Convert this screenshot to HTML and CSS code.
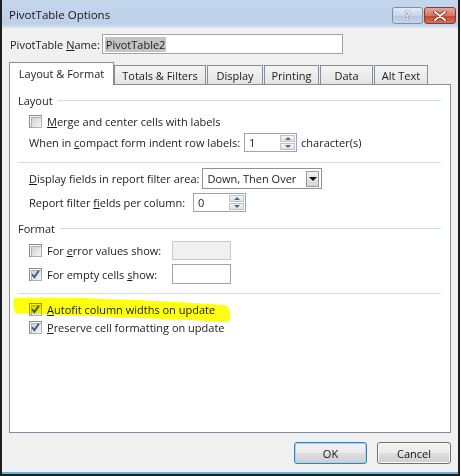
FILE: index.html
```html
<!DOCTYPE html>
<html>
<head>
<meta charset="utf-8">
<link rel="stylesheet" href="styles.css">
</head>
<body>
<div class="window">
  <div class="titlebar">
    <span class="title">PivotTable Options</span>
    <div class="title-btns">
      <div class="tbtn help">?</div>
      <div class="tbtn close">
        <svg width="14" height="10" viewBox="0 0 14 10"><path d="M2 1 L12 9 M12 1 L2 9" stroke="#5a1a12" stroke-width="3.4" stroke-linecap="round"/><path d="M2 1 L12 9 M12 1 L2 9" stroke="#fff" stroke-width="2" stroke-linecap="round"/></svg>
      </div>
    </div>
  </div>
  <div class="body">
    <div class="name-row">
      <span class="name-label">PivotTable <u>N</u>ame:</span>
      <div class="textbox name-box"><span class="sel">PivotTable2</span></div>
    </div>
    <div class="tabs">
      <div class="tab active t-layout">Layout &amp; Format</div>
      <div class="tab t-totals">Totals &amp; Filters</div>
      <div class="tab t-display">Display</div>
      <div class="tab t-printing">Printing</div>
      <div class="tab t-data">Data</div>
      <div class="tab t-alt">Alt Text</div>
    </div>
    <div class="panel">
      <div class="group-head head-layout">Layout</div>
      <div class="row row-merge">
        <span class="cb"></span>
        <span class="cb-label"><u>M</u>erge and center cells with labels</span>
      </div>
      <div class="row row-indent">
        <span>When in <u>c</u>ompact form indent row labels:</span>
        <div class="spin spin-indent"><span class="spin-val">1</span><span class="spin-btns"><span class="sb"><i class="up"></i></span><span class="sb"><i class="down"></i></span></span></div>
        <span>character(s)</span>
      </div>
      <div class="sep sep-1"></div>
      <div class="row row-display">
        <span><u>D</u>isplay fields in report filter area:</span>
        <div class="select"><span class="select-val">Down, Then Over</span><span class="select-btn"><i></i></span></div>
      </div>
      <div class="row row-report">
        <span>Report filter <u>f</u>ields per column:</span>
        <div class="spin spin-report"><span class="spin-val">0</span><span class="spin-btns"><span class="sb"><i class="up"></i></span><span class="sb"><i class="down"></i></span></span></div>
      </div>
      <div class="group-head head-format">Format</div>
      <div class="row row-error">
        <span class="cb"></span>
        <span class="cb-label fmt-label">For <u>e</u>rror values show:</span>
        <div class="textbox small-box disabled"></div>
      </div>
      <div class="row row-empty">
        <span class="cb checked"><svg viewBox="0 0 13 13" width="13" height="13"><path d="M3.2 6.2 L5.4 9.2 L9.8 2.8" fill="none" stroke="#3e5687" stroke-width="1.9"/></svg></span>
        <span class="cb-label fmt-label">For empty cells <u>s</u>how:</span>
        <div class="textbox small-box"></div>
      </div>
      <div class="sep sep-2"></div>
      <div class="row row-autofit">
        <span class="cb checked"><svg viewBox="0 0 13 13" width="13" height="13"><path d="M3.2 6.2 L5.4 9.2 L9.8 2.8" fill="none" stroke="#3e5687" stroke-width="1.9"/></svg></span>
        <span class="cb-label"><u>A</u>utofit column widths on update</span>
      </div>
      <div class="row row-preserve">
        <span class="cb checked"><svg viewBox="0 0 13 13" width="13" height="13"><path d="M3.2 6.2 L5.4 9.2 L9.8 2.8" fill="none" stroke="#3e5687" stroke-width="1.9"/></svg></span>
        <span class="cb-label"><u>P</u>reserve cell formatting on update</span>
      </div>
    </div>
    <div class="buttons">
      <div class="btn ok">OK</div>
      <div class="btn">Cancel</div>
    </div>
  </div>
  <svg class="highlight" width="461" height="476" viewBox="0 0 461 476">
    <path d="M14 298 C60 296 150 300 226 305 Q233 313 229 322 C150 318 60 315 15 313 Q12 305 14 298 Z" fill="#ffff10"/>
  </svg>
</div>
</body>
</html>
```

FILE: styles.css
```css
* { box-sizing: border-box; }

body {
  margin: 0;
  background: #ffffff;
  font-family: "Open Sans", "Segoe UI", sans-serif;
  font-size: 11px;
  color: #1b1b1b;
}

u { text-decoration: underline; text-underline-offset: 1px; }

.window {
  position: relative;
  width: 460px;
  height: 476px;
  border: 2px solid #1e1e1e;
  border-top: 0;
  display: flex;
  flex-direction: column;
  background: #f0f0f0;
}

.titlebar {
  height: 28px;
  flex-shrink: 0;
  display: flex;
  justify-content: space-between;
  align-items: flex-start;
  padding: 0 2px 0 7px;
  background: linear-gradient(#c4d6ec 0%, #bcd0e9 85%, #dbe6f3 100%);
}

.title {
  font-size: 11.5px;
  line-height: 29px;
  color: #151515;
}

.title-btns {
  display: flex;
  gap: 1px;
  margin-top: 7px;
}

.tbtn {
  height: 17px;
  border-radius: 3px;
  display: flex;
  align-items: center;
  justify-content: center;
}

.help {
  width: 31px;
  border: 1px solid #7d90aa;
  background: linear-gradient(#e3eaf4 0%, #cbd7e7 50%, #b6c7dd 51%, #c7d5e8 100%);
  color: #f8fafd;
  font-weight: bold;
  font-size: 12px;
  text-shadow: 0 0 1px #31425d, 0 0 1px #31425d;
}

.close {
  width: 32px;
  border: 1px solid #8c3a2e;
  background: linear-gradient(#e9a596 0%, #d87361 50%, #c5452f 51%, #d3735d 100%);
}

.body {
  flex: 1;
  display: flex;
  flex-direction: column;
  box-shadow: inset 0 -2px 0 #5db5e4;
}

.name-row {
  display: flex;
  align-items: center;
  margin: 6px 0 0 8px;
  gap: 2px;
}

.textbox {
  background: #ffffff;
  border: 1px solid #a2a4a9;
}

.name-box {
  width: 241px;
  height: 20px;
  padding: 1px 0 0 2px;
  display: flex;
  align-items: center;
}

.sel {
  background: #c4c4c4;
  line-height: 15px;
  padding: 0 1px;
}

.tabs {
  display: flex;
  align-items: flex-end;
  height: 22px;
  margin: 8px 0 0 7px;
  position: relative;
  z-index: 1;
}

.tab {
  height: 19px;
  border: 1px solid #898c95;
  border-bottom: 0;
  background: linear-gradient(#f5f5f5, #e4e4e4);
  display: flex;
  align-items: center;
  justify-content: center;
  margin-left: 1px;
  padding-top: 1px;
}

.tab.active {
  height: 23px;
  margin-bottom: -1px;
  margin-left: 0;
  background: #ffffff;
  padding-top: 0;
  padding-bottom: 2px;
}

.t-layout { width: 105px; }
.t-totals { width: 92px; margin-left: 0; }
.t-display { width: 56px; }
.t-printing { width: 55px; }
.t-data { width: 53px; }
.t-alt { width: 54px; }

.panel {
  margin: 0 7px;
  height: 349px;
  background: #ffffff;
  border: 1px solid #898c95;
  padding: 0 9px 0 8px;
  display: flex;
  flex-direction: column;
}

.group-head {
  display: flex;
  align-items: center;
  height: 18px;
  gap: 5px;
  color: #1e1e1e;
}

.group-head::after {
  content: "";
  flex: 1;
  height: 1px;
  background: #d3dde5;
}

.head-layout { margin-top: 6px; }
.head-format { margin-top: 7px; }

.sep {
  height: 1px;
  background: #d3dde5;
  flex-shrink: 0;
}

.sep-1 { margin-top: 10px; }
.sep-2 { margin-top: 9px; }

.row {
  display: flex;
  align-items: center;
  height: 19px;
  padding-left: 11px;
  flex-shrink: 0;
}

.row-merge { margin-top: 3px; height: 18px; }
.row-indent { margin-top: 3px; }
.row-display { margin-top: 5px; height: 21px; }
.row-report { margin-top: 4px; }
.row-error { margin-top: 4px; }
.row-empty { margin-top: 4px; height: 20px; }
.row-autofit { margin-top: 6px; height: 18px; }
.row-preserve { height: 18px; }

.cb {
  position: relative;
  width: 13px;
  height: 13px;
  flex-shrink: 0;
  border: 1px solid #8e8f8f;
  background: #f4f4f4;
  padding: 1px;
}

.cb::before {
  content: "";
  display: block;
  width: 9px;
  height: 9px;
  border: 1px solid #aeb2b8;
  background: linear-gradient(135deg, #cdd1d7, #f6f6f6);
}

.cb svg {
  position: absolute;
  left: -1px;
  top: -1px;
}

.cb-label { margin-left: 5px; }

.fmt-label { width: 125px; }

.spin {
  height: 19px;
  width: 53px;
  border: 1px solid #a2a4a9;
  background: #fff;
  display: flex;
  align-items: center;
  justify-content: space-between;
  padding: 1px;
}

.spin-indent { margin: 0 4px 0 4px; }
.spin-report { margin-left: 8px; }

.spin-val { padding-left: 3px; }

.spin-btns {
  display: flex;
  flex-direction: column;
  width: 15px;
  height: 15px;
  gap: 1px;
}

.sb {
  flex: 1;
  border: 1px solid #b9c3d1;
  background: linear-gradient(#f3f5f8, #dce3ec);
  display: flex;
  align-items: center;
  justify-content: center;
}

.sb i {
  width: 0;
  height: 0;
  border-left: 3px solid transparent;
  border-right: 3px solid transparent;
}

.sb i.up { border-bottom: 3px solid #4b6489; }
.sb i.down { border-top: 3px solid #4b6489; }

.select {
  margin-left: 3px;
  width: 120px;
  height: 21px;
  border: 1px solid #8f9194;
  background: #fff;
  display: flex;
  align-items: center;
  justify-content: space-between;
  padding: 2px;
}

.select-val { padding-left: 2px; }

.select-btn {
  width: 13px;
  height: 16px;
  border: 1px solid #9a9a9a;
  background: linear-gradient(#f2f2f2, #d6d6d6);
  display: flex;
  align-items: center;
  justify-content: center;
}

.select-btn i {
  width: 0;
  height: 0;
  border-left: 4px solid transparent;
  border-right: 4px solid transparent;
  border-top: 4px solid #111;
}

.small-box {
  width: 59px;
  height: 19px;
}

.row-empty .small-box { height: 20px; }

.small-box.disabled {
  background: #f0f0f0;
  border-color: #c9cacd;
}

.buttons {
  display: flex;
  justify-content: flex-end;
  gap: 10px;
  margin-top: 9px;
  padding-right: 7px;
}

.btn {
  width: 74px;
  height: 22px;
  border: 1px solid #707070;
  border-radius: 3px;
  background: linear-gradient(#f2f2f2 0%, #ebebeb 48%, #dddddd 52%, #cfcfcf 100%);
  box-shadow: inset 0 0 0 1px #f8f8f8;
  display: flex;
  align-items: center;
  justify-content: center;
  color: #111;
}

.btn.ok {
  width: 73px;
  border-color: #3c7fb1;
  box-shadow: inset 0 0 0 1px #9fd6f5;
}

.highlight {
  position: absolute;
  left: -2px;
  top: 0;
  pointer-events: none;
  mix-blend-mode: multiply;
}
```
